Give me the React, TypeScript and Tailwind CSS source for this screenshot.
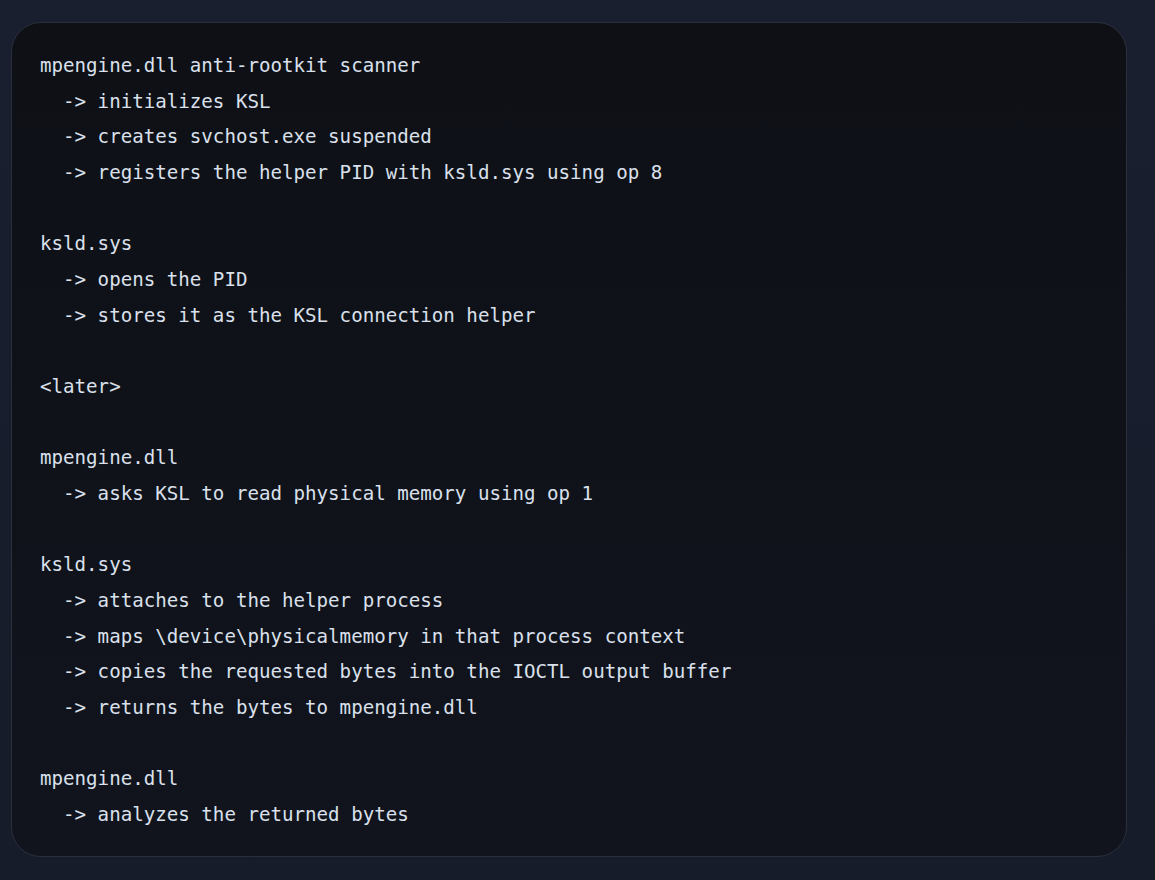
import React from "react";

const code = `mpengine.dll anti-rootkit scanner
  -> initializes KSL
  -> creates svchost.exe suspended
  -> registers the helper PID with ksld.sys using op 8

ksld.sys
  -> opens the PID
  -> stores it as the KSL connection helper

<later>

mpengine.dll
  -> asks KSL to read physical memory using op 1

ksld.sys
  -> attaches to the helper process
  -> maps \\device\\physicalmemory in that process context
  -> copies the requested bytes into the IOCTL output buffer
  -> returns the bytes to mpengine.dll

mpengine.dll
  -> analyzes the returned bytes`;

export default function App() {
  return (
    <div className="min-h-[880px] w-full bg-gradient-to-b from-[#1a1f2f] to-[#171c2b] pl-[11px] pr-[28px] pt-[22px] pb-[22px]">
      <div className="rounded-[30px] border border-[#2a2f3b] bg-gradient-to-b from-[#0e1016] to-[#11141d] px-[28px] pt-[25px] pb-[23px]">
        <pre
          className="m-0 whitespace-pre text-[19.15px] leading-[35.67px] text-[#dae0ec]"
          style={{ fontFamily: '"DejaVu Sans Mono", "Liberation Mono", monospace' }}
        >
          {code}
        </pre>
      </div>
    </div>
  );
}
